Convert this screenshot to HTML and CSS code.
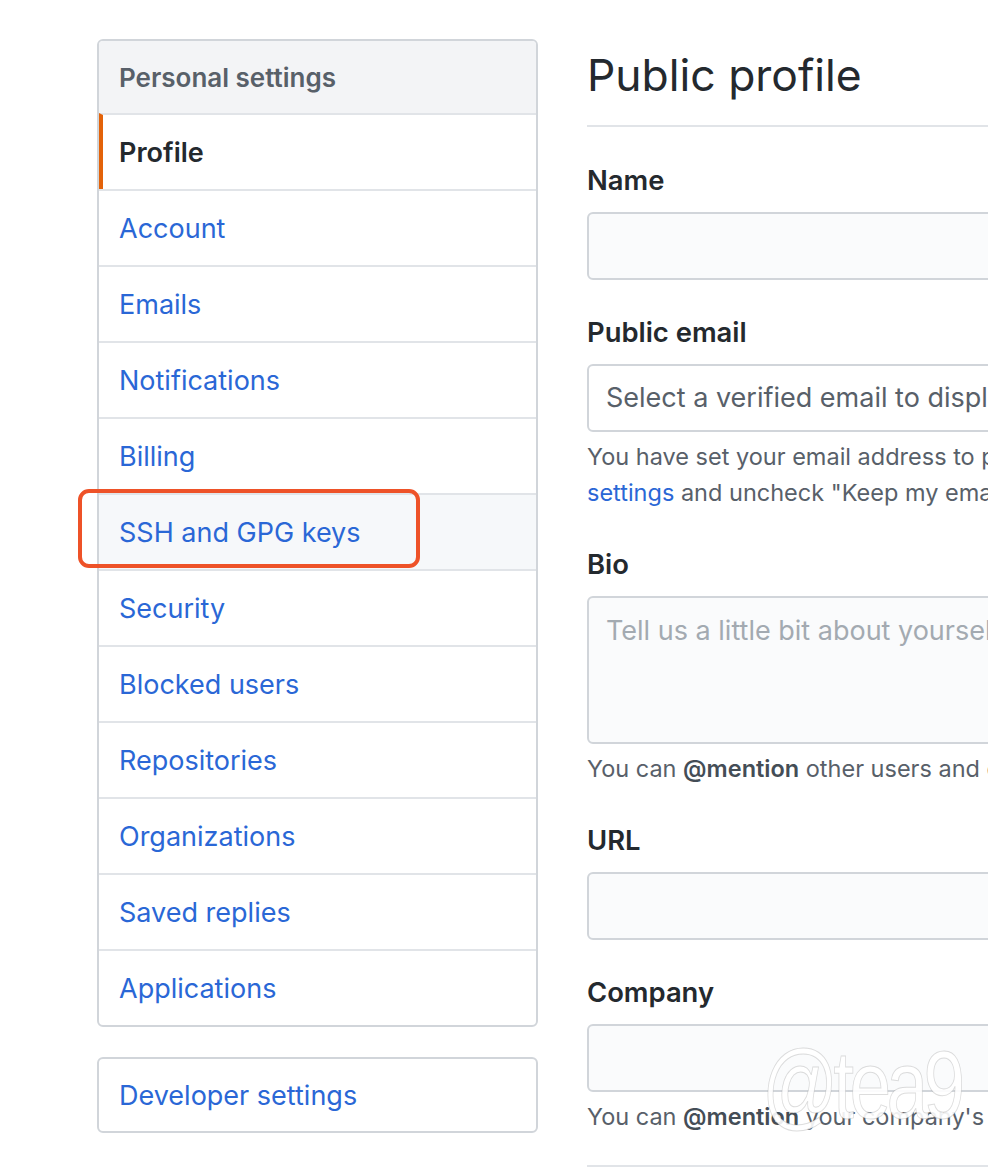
FILE: index.html
```html
<!DOCTYPE html>
<html lang="en">
<head>
<meta charset="utf-8">
<title>Public profile</title>
<link rel="stylesheet" href="styles.css">
</head>
<body>
<div class="page">
  <aside class="side">
    <nav class="menu">
      <div class="menu-head">Personal settings</div>
      <a class="menu-item selected">Profile</a>
      <a class="menu-item">Account</a>
      <a class="menu-item">Emails</a>
      <a class="menu-item">Notifications</a>
      <a class="menu-item">Billing</a>
      <a class="menu-item hover">SSH and GPG keys<span class="mark"></span></a>
      <a class="menu-item">Security</a>
      <a class="menu-item">Blocked users</a>
      <a class="menu-item">Repositories</a>
      <a class="menu-item">Organizations</a>
      <a class="menu-item">Saved replies</a>
      <a class="menu-item">Applications</a>
    </nav>
    <nav class="menu dev">
      <a class="menu-item first">Developer settings</a>
    </nav>
  </aside>
  <main class="main">
    <h1 class="title">Public profile</h1>
    <div class="group">
      <div class="label">Name</div>
      <div class="input"></div>
    </div>
    <div class="group noted">
      <div class="label">Public email</div>
      <div class="input select">Select a verified email to display</div>
      <p class="note">You have set your email address to private. To toggle email privacy, go to <a class="link">email</a></p>
      <p class="note"><a class="link">settings</a> and uncheck "Keep my email address private."</p>
    </div>
    <div class="group noted">
      <div class="label">Bio</div>
      <div class="input area">Tell us a little bit about yourself</div>
      <p class="note">You can <b>@mention</b> other users and organizations to link to them.</p>
    </div>
    <div class="group">
      <div class="label">URL</div>
      <div class="input"></div>
    </div>
    <div class="group noted">
      <div class="label">Company</div>
      <div class="input"></div>
      <p class="note">You can <b>@mention</b> your company's GitHub organization to link it.</p>
    </div>
    <div class="rule"></div>
  </main>
  <div class="watermark">@tea9</div>
</div>
</body>
</html>
```

FILE: styles.css
```css
html, body {
  margin: 0;
  padding: 0;
  overflow: hidden;
  background: #fff;
}
body {
  font-family: Inter, "Liberation Sans", Arial, sans-serif;
  color: #24292e;
}
.page {
  position: relative;
  display: flex;
  align-items: flex-start;
  gap: 49px;
  padding: 39px 0 0 97px;
  width: 1600px;
}
.side {
  width: 441px;
  flex: none;
  display: flex;
  flex-direction: column;
  gap: 30px;
}
.menu {
  border: 2px solid #d1d5da;
  border-radius: 6px;
  display: flex;
  flex-direction: column;
}
.menu-head {
  height: 72px;
  box-sizing: border-box;
  display: flex;
  align-items: center;
  padding-left: 20px;
  background: #f3f4f6;
  color: #586069;
  font-weight: 600;
  font-size: 26px;
  border-radius: 4px 4px 0 0;
}
.menu-item {
  position: relative;
  height: 76px;
  box-sizing: border-box;
  border-top: 2px solid #e1e4e8;
  display: flex;
  align-items: center;
  padding-left: 20px;
  color: #2a67d6;
  font-size: 27px;
  text-decoration: none;
}
.menu-item.first {
  border-top: 0;
  height: 72px;
}
.menu-item.selected {
  color: #24292e;
  font-weight: 600;
  padding-left: 16px;
  border-left: 4px solid #e36209;
}
.menu-item.hover {
  background: #f6f8fa;
}
.mark {
  position: absolute;
  left: -21px;
  top: -6px;
  width: 342px;
  height: 79px;
  box-sizing: border-box;
  border: 4px solid #ee5228;
  border-radius: 11px;
}
.main {
  width: 900px;
  flex: none;
  padding-top: 6px;
}
.title {
  margin: 0;
  font-size: 44.4px;
  font-weight: normal;
  line-height: 60px;
  padding-bottom: 20px;
  border-bottom: 2px solid #e1e4e8;
  margin-bottom: 33px;
}
.group + .group {
  margin-top: 32px;
}
.group.noted + .group {
  margin-top: 33px;
}
.label {
  font-weight: 600;
  font-size: 27.4px;
  line-height: 40px;
  margin-bottom: 12px;
}
.input {
  width: 880px;
  height: 68px;
  box-sizing: border-box;
  border: 2px solid #d1d5da;
  border-radius: 6px;
  background: #fafbfc;
  font-size: 27px;
  line-height: 64px;
  padding-left: 17px;
  white-space: nowrap;
  overflow: hidden;
}
.input.select {
  background: #fff;
  color: #586069;
}
.input.area {
  height: 148px;
  line-height: 34px;
  padding-top: 16px;
  color: #a3aab1;
}
.note {
  margin: 0;
  font-size: 23.5px;
  line-height: 36px;
  color: #586069;
  white-space: nowrap;
}
.group .input + .note {
  margin-top: 7px;
}
.note b {
  color: #444d56;
  font-weight: 600;
}
.link {
  color: #2a67d6;
}
.rule {
  margin-top: 30px;
  border-top: 2px solid #e1e4e8;
}
.watermark {
  position: absolute;
  left: 762px;
  top: 1030px;
  font-family: "Liberation Sans", Arial, sans-serif;
  font-size: 96px;
  letter-spacing: -6px;
  color: rgba(255, 255, 255, 0.9);
  -webkit-text-stroke: 1px rgba(120, 120, 120, 0.25);
  transform: scaleX(0.78);
  transform-origin: left top;
  pointer-events: none;
}
```
